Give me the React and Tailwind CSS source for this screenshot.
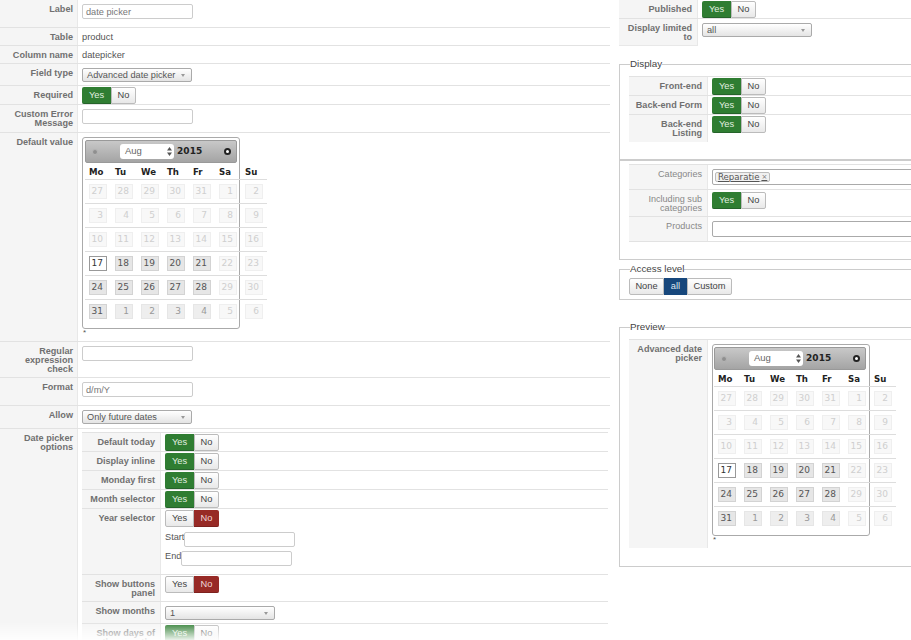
import React from 'react';

const DAYS = ['Mo', 'Tu', 'We', 'Th', 'Fr', 'Sa', 'Su'];

// kind: old = greyed out, wk = selectable, today = boxed, next = next month
const CELLS = [
  ['27', 'old'], ['28', 'old'], ['29', 'old'], ['30', 'old'], ['31', 'old'], ['1', 'old'], ['2', 'old'],
  ['3', 'old'], ['4', 'old'], ['5', 'old'], ['6', 'old'], ['7', 'old'], ['8', 'old'], ['9', 'old'],
  ['10', 'old'], ['11', 'old'], ['12', 'old'], ['13', 'old'], ['14', 'old'], ['15', 'old'], ['16', 'old'],
  ['17', 'today'], ['18', 'wk'], ['19', 'wk'], ['20', 'wk'], ['21', 'wk'], ['22', 'old'], ['23', 'old'],
  ['24', 'wk'], ['25', 'wk'], ['26', 'wk'], ['27', 'wk'], ['28', 'wk'], ['29', 'old'], ['30', 'old'],
  ['31', 'wk'], ['1', 'next'], ['2', 'next'], ['3', 'next'], ['4', 'next'], ['5', 'old'], ['6', 'old'],
];

const cellStyles = {
  old: 'bg-[#f8f8f8] border-[#efefef] text-[#cfcfcf]',
  wk: 'bg-[#e6e6e6] border-[#d3d3d3] text-[#555]',
  today: 'bg-white border-[#999] text-[#333]',
  next: 'bg-[#eee] border-[#e6e6e6] text-[#999]',
};

const Calendar = ({ tight }) => (
  <div>
    <div className={`w-[158px] h-[192px] border border-[#aaa] rounded-[3px] py-[2px] pr-[2px] font-['DejaVu_Sans',sans-serif] ${tight ? 'pl-[1px]' : 'pl-[2px]'}`}>
      <div className="w-[152px] h-[23px] flex items-center border border-[#999] rounded-[2px] bg-gradient-to-b from-[#c8c8c8] to-[#a4a4a4]">
        <span className="w-[6px] h-[6px] ml-[6px] rounded-full bg-[#8f8f8f] border border-[#b5b5b5]"></span>
        <div className="w-[54px] h-[15px] ml-[22px] bg-white rounded-[3px] flex items-center justify-between pl-[5px] pr-[2px] text-[9.5px] text-[#666] font-['Liberation_Sans',sans-serif]">
          Aug
          <svg width="5" height="9" viewBox="0 0 5 9">
            <polygon points="2.5,0 5,3.5 0,3.5" fill="#555" />
            <polygon points="2.5,9 5,5.5 0,5.5" fill="#555" />
          </svg>
        </div>
        <span className="ml-[3px] text-[9px] font-bold text-[#222] tracking-[0.1px]">2015</span>
        <span className="w-[7px] h-[7px] ml-[22px] rounded-full border-2 border-[#222] bg-white"></span>
      </div>
      <div className="w-[182px] grid grid-cols-7">
        {DAYS.map((d) => (
          <div key={d} className="h-[16px] pl-[4px] pt-[3px] text-[8.6px] leading-[12px] font-bold text-[#222]">{d}</div>
        ))}
        {CELLS.map(([n, kind], i) => (
          <div key={i} className="h-[24px] border-t border-[#ddd] pl-[4px] pt-[4px]">
            <div className={`w-[18px] h-[15px] border pr-[3px] text-right text-[9px] leading-[13px] ${cellStyles[kind]}`}>{n}</div>
          </div>
        ))}
      </div>
    </div>
    <div className="text-[8px] leading-[8px] text-[#555] pl-[1px]">*</div>
  </div>
);

const YesNo = ({ no }) => (
  <div className="flex w-[54px] h-[17px] text-[9.3px]">
    {no ? (
      <>
        <div className="w-[29px] flex items-center justify-center pt-[1px] rounded-l-[2px] border border-[#bbb] bg-gradient-to-b from-white to-[#e8e8e8] text-[#444]">Yes</div>
        <div className="w-[25px] flex items-center justify-center pt-[1px] rounded-r-[2px] bg-[#972a26] border-b border-[#7d211e] text-[#f0d8d8]">No</div>
      </>
    ) : (
      <>
        <div className="w-[29px] flex items-center justify-center pt-[1px] rounded-l-[2px] bg-[#2f7d32] border-b border-[#25632a] text-[#e0efe0]">Yes</div>
        <div className="w-[25px] flex items-center justify-center pt-[1px] rounded-r-[2px] border border-[#bbb] bg-gradient-to-b from-white to-[#e8e8e8] text-[#444]">No</div>
      </>
    )}
  </div>
);

const TextBox = ({ value, className = 'w-[111px]' }) => (
  <div className={`h-[15px] border border-[#ccc] rounded-[2px] bg-white pl-[3px] text-[9.2px] leading-[14px] text-[#777] ${className}`}>{value}</div>
);

const Select = ({ value, className = 'w-[110px]' }) => (
  <div className={`h-[14px] flex items-center justify-between border border-[#aaa] rounded-[2px] bg-gradient-to-b from-white to-[#e4e4e4] pl-[4px] pr-[6px] pt-[1px] text-[9.2px] text-[#555] ${className}`}>
    {value}
    <svg width="4" height="3" viewBox="0 0 4 3"><polygon points="0,0 4,0 2,3" fill="#999" /></svg>
  </div>
);

// one form row: label cell with grey background plus the value cell
const Row = ({ label, h, pt = 'pt-[4px]', bold = true, w = 'w-[79px] pr-[5px]', last, children }) => (
  <div className={`flex ${h} ${last ? '' : 'border-b border-[#e2e2e2]'}`}>
    <div className={`${w} shrink-0 bg-[#f5f5f5] border-r border-[#e8e8e8] pt-[5px] text-right text-[9.1px] leading-[9.2px] ${bold ? 'font-bold text-[#707070]' : 'text-[#888]'}`}>
      {label}
    </div>
    <div className={`flex-1 pl-[4px] ${pt}`}>{children}</div>
  </div>
);

const Legend = ({ children }) => (
  <legend className="ml-[10px] h-[12px] text-[9.8px] leading-[12px] text-[#444]">{children}</legend>
);

const LEFT = 'w-[78px] pr-[4px]';

export default function App() {
  return (
    <div className="w-[911px] h-[640px] overflow-hidden flex bg-white font-['Liberation_Sans',Arial,sans-serif] text-[#555]">
      {/* left form */}
      <div className="w-[610px] shrink-0 h-[640px] relative overflow-hidden">
        <Row w={LEFT} label="Label" h="h-[28px]"><TextBox value="date picker" /></Row>
        <Row w={LEFT} label="Table" h="h-[18px]" pt="pt-[4px]"><div className="text-[9.3px] leading-[11px]">product</div></Row>
        <Row w={LEFT} label="Column name" h="h-[18px]" pt="pt-[4px]"><div className="text-[9.3px] leading-[11px]">datepicker</div></Row>
        <Row w={LEFT} label="Field type" h="h-[22px]"><Select value="Advanced date picker" /></Row>
        <Row w={LEFT} label="Required" h="h-[19px]" pt="pt-[1px]"><YesNo /></Row>
        <Row w={LEFT} label="Custom Error Message" h="h-[28px]"><TextBox value="" /></Row>
        <Row w={LEFT} label="Default value" h="h-[209px]"><Calendar /></Row>
        <Row w={LEFT} label="Regular expression check" h="h-[36px]"><TextBox value="" /></Row>
        <Row w={LEFT} label="Format" h="h-[28px]"><TextBox value="d/m/Y" /></Row>
        <Row w={LEFT} label="Allow" h="h-[23px]"><Select value="Only future dates" /></Row>
        <Row w={LEFT} label="Date picker options" h="h-[211px]" pt="pt-[3px]" last>
          <div className="w-[526px] border-t border-[#e2e2e2]">
            <Row label="Default today" h="h-[19px]" pt="pt-[1px]"><YesNo /></Row>
            <Row label="Display inline" h="h-[19px]" pt="pt-[1px]"><YesNo /></Row>
            <Row label="Monday first" h="h-[19px]" pt="pt-[1px]"><YesNo /></Row>
            <Row label="Month selector" h="h-[19px]" pt="pt-[1px]"><YesNo /></Row>
            <Row label="Year selector" h="h-[66px]" pt="pt-[1px]">
              <YesNo no />
              <div className="flex mt-[5px] text-[9.2px] leading-[10px] text-[#555]">
                <span className="w-[19px]">Start</span>
                <TextBox value="" />
              </div>
              <div className="flex mt-[4px] text-[9.2px] leading-[10px] text-[#555]">
                <span className="w-[16px]">End</span>
                <TextBox value="" />
              </div>
            </Row>
            <Row label="Show buttons panel" h="h-[27px]" pt="pt-[1px]"><YesNo no /></Row>
            <Row label="Show months" h="h-[22px]"><Select value="1" /></Row>
            <Row label="Show days of other months" h="h-[30px]" pt="pt-[1px]" last><YesNo /></Row>
          </div>
        </Row>
        <div className="absolute left-0 right-0 bottom-0 h-[18px] bg-gradient-to-b from-white/0 to-white/90"></div>
      </div>

      {/* right column */}
      <div className="w-[292px] ml-[9px] shrink-0">
        <Row label="Published" h="h-[19px]" pt="pt-[1px]"><YesNo /></Row>
        <div className="flex h-[27px]">
          <div className="w-[79px] shrink-0 bg-[#f5f5f5] border-b border-r border-[#e8e8e8] pr-[5px] pt-[5px] text-right text-[9.1px] leading-[9.2px] font-bold text-[#707070]">Display limited to</div>
          <div className="pl-[4px] pt-[4px]"><Select value="all" /></div>
        </div>

        <fieldset className="w-[400px] mt-[12px] border border-[#ccc] pb-[17px]">
          <Legend>Display</Legend>
          <div className="mt-[6px] ml-[9px] border-t border-[#e2e2e2]">
            <Row label="Front-end" h="h-[19px]" pt="pt-[1px]"><YesNo /></Row>
            <Row label="Back-end Form" h="h-[19px]" pt="pt-[1px]"><YesNo /></Row>
            <Row label={<>Back-end<br />Listing</>} h="h-[27px]" pt="pt-[1px]" last><YesNo /></Row>
          </div>
        </fieldset>

        <fieldset className="w-[400px] border border-[#ccc] pt-[3px] pb-[17px]">
          <div className="ml-[9px] border-t border-[#e2e2e2]">
            <Row label="Categories" h="h-[25px]" bold={false}>
              <div className="h-[16px] w-[300px] flex items-center border border-[#aaa] rounded-[2px] bg-white pl-[2px]">
                <span className="flex items-center h-[10px] px-[2px] gap-[2px] border border-[#bbb] rounded-[2px] bg-[#f0f0f0] font-['DejaVu_Sans',sans-serif] text-[8.6px] underline text-[#555]">
                  Reparatie
                  <span className="text-[7px] text-[#777]">×</span>
                </span>
              </div>
            </Row>
            <Row label="Including sub categories" h="h-[27px]" pt="pt-[2px]" bold={false}><YesNo /></Row>
            <Row label="Products" h="h-[25px]" bold={false}>
              <div className="h-[16px] w-[300px] border border-[#aaa] rounded-[2px] bg-white"></div>
            </Row>
          </div>
        </fieldset>

        <fieldset className="w-[400px] mt-[3px] border border-[#ccc] pt-[3px] pb-[4px]">
          <Legend>Access level</Legend>
          <div className="ml-[9px] flex h-[17px] text-[9.3px]">
            <div className="w-[35px] flex items-center justify-center pt-[1px] rounded-l-[2px] border border-[#bbb] bg-gradient-to-b from-white to-[#e8e8e8] text-[#444]">None</div>
            <div className="w-[23px] flex items-center justify-center pt-[1px] bg-[#17477c] text-[#dde6f0]">all</div>
            <div className="w-[45px] flex items-center justify-center pt-[1px] rounded-r-[2px] border border-[#bbb] bg-gradient-to-b from-white to-[#e8e8e8] text-[#444]">Custom</div>
          </div>
        </fieldset>

        <fieldset className="w-[400px] mt-[21px] border border-[#ccc] pb-[18px]">
          <Legend>Preview</Legend>
          <div className="mt-[6px] ml-[9px] border-t border-[#e2e2e2]">
            <Row label="Advanced date picker" h="h-[208px]" last><Calendar tight /></Row>
          </div>
        </fieldset>
      </div>
    </div>
  );
}
